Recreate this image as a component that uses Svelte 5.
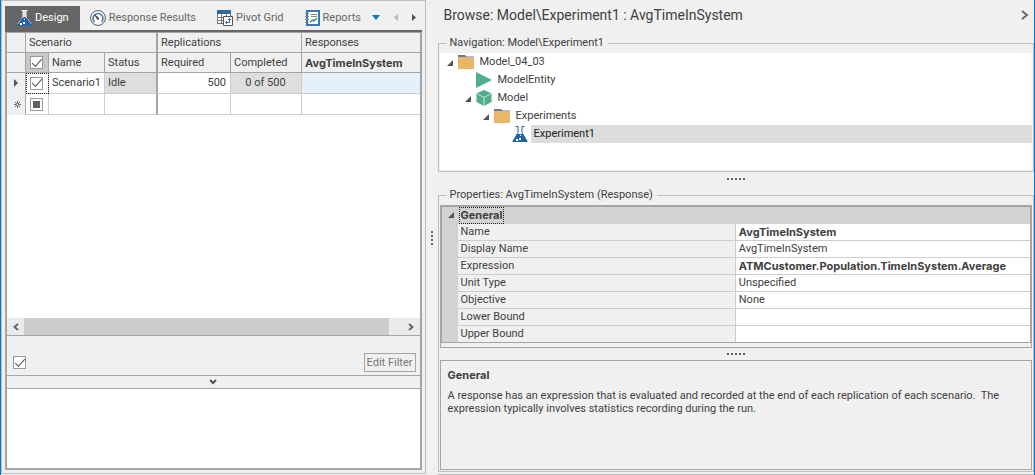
<script>
  let activeTab = 'Design';
  let allChecked = true;
  let filterOn = true;
  let scenario = { active: true, name: 'Scenario1', status: 'Idle', required: 500, completed: '0 of 500' };

  const tabs = ['Design', 'Response Results', 'Pivot Grid', 'Reports'];

  const tree = [
    { label: 'Model_04_03', icon: 'folder', level: 0, open: true },
    { label: 'ModelEntity', icon: 'entity', level: 1, open: false },
    { label: 'Model', icon: 'cube', level: 1, open: true },
    { label: 'Experiments', icon: 'folder', level: 2, open: true },
    { label: 'Experiment1', icon: 'flask', level: 3, open: false }
  ];
  let selected = 'Experiment1';

  const properties = [
    { name: 'Name', value: 'AvgTimeInSystem', changed: true },
    { name: 'Display Name', value: 'AvgTimeInSystem' },
    { name: 'Expression', value: 'ATMCustomer.Population.TimeInSystem.Average', changed: true },
    { name: 'Unit Type', value: 'Unspecified' },
    { name: 'Objective', value: 'None' },
    { name: 'Lower Bound', value: '' },
    { name: 'Upper Bound', value: '' }
  ];
</script>

<div class="window">
  <section class="left">
    <div class="tabs" role="tablist">
      {#each tabs as tab}
        <button type="button" role="tab" class="tab" class:active={activeTab === tab} aria-selected={activeTab === tab} on:click={() => (activeTab = tab)}>
          {#if tab === 'Design'}
            <svg width="15" height="16" viewBox="0 0 15 16">
              <path d="M4.500 .5h1.500v6.500L1 14M10.500 .5H9v6.500L14 14" fill="none" stroke="#fff" />
              <path d="M6 0h3v7H6z" fill="#dbe6f2" />
              <path d="M5 8h5l4.500 7v1H.5v-1z" fill="#2563a8" />
              <path d="M3 13h2v2H3zM6 12h2v2H6zM7 9h1v1H7z" fill="#fff" />
            </svg>
          {:else if tab === 'Response Results'}
            <svg width="16" height="16" viewBox="0 0 16 16">
              <circle cx="8" cy="8" r="7.400" fill="#fff" stroke="#555" />
              <path d="M4.500 12a5 5 0 1 1 7 0" fill="none" stroke="#3a76b5" stroke-width="1.500" />
              <path d="M5 5l4 3.500-1.500 1z" fill="#444" stroke="#444" />
            </svg>
          {:else if tab === 'Pivot Grid'}
            <svg width="16" height="16" viewBox="0 0 16 16">
              <path d="M.5.5h13v13H.5z" fill="#fff" stroke="#666" />
              <path d="M0 0h14v4H0z" fill="#34679f" />
              <path d="M.5 4v9.500M4.500 4v9.500M9.500 4v5M0 7.500h14M0 10.500h7" fill="none" stroke="#777" />
              <path d="M6.500 6.500h9v9h-9z" fill="#fff" stroke="#555" />
              <path d="M8 12.500l2-2v4zM10.500 10l2-2 2 2z" fill="#2a6db5" />
              <path d="M9.500 12.500h3v-3" fill="none" stroke="#2a6db5" />
            </svg>
          {:else}
            <svg width="15" height="16" viewBox="0 0 15 16">
              <path d="M2 1h12v14H2z" fill="#fff" stroke="#3a76b5" stroke-width="2" />
              <path d="M0 3.500h4M0 6.500h4M0 9.500h4M0 12.500h4" stroke="#888" />
              <path d="M6 4.500h6M6 6.500h6" stroke="#888" />
              <path d="M5 12l3-2 1 1 3-3" fill="none" stroke="#2f9468" stroke-width="1.500" />
            </svg>
          {/if}
          <span>{tab}</span>
        </button>
      {/each}
      <div class="arrows">
        <button type="button" aria-label="More reports"><svg width="8" height="5"><path d="M0 0h8L4 5z" fill="#0078d7" /></svg></button>
        <button type="button" aria-label="Previous tab" disabled><svg width="4" height="7"><path d="M4 0v7L0 3.500z" fill="#b8b8b8" /></svg></button>
        <button type="button" aria-label="Next tab"><svg width="4" height="7"><path d="M0 0v7l4-3.500z" fill="#555" /></svg></button>
      </div>
    </div>

    <div class="frame">
      <table class="grid">
        <colgroup>
          <col class="c-mark" /><col class="c-check" /><col class="c-name" /><col class="c-status" />
          <col class="c-required" /><col class="c-completed" /><col />
        </colgroup>
        <thead>
          <tr>
            <th></th>
            <th colspan="3" class="thick">Scenario</th>
            <th colspan="2">Replications</th>
            <th>Responses</th>
          </tr>
          <tr>
            <th></th>
            <th class="check pressed"><input type="checkbox" aria-label="Select all scenarios" bind:checked={allChecked} /></th>
            <th>Name</th>
            <th class="thick">Status</th>
            <th>Required</th>
            <th>Completed</th>
            <th class="strong">AvgTimeInSystem</th>
          </tr>
        </thead>
        <tbody>
          <tr>
            <td class="mark"><svg width="4" height="8"><path d="M0 0v8l4-4z" fill="#555" /></svg></td>
            <td class="check focus"><input type="checkbox" aria-label="Scenario1 active" bind:checked={scenario.active} /></td>
            <td>{scenario.name}</td>
            <td class="locked thick">{scenario.status}</td>
            <td class="num">{scenario.required}</td>
            <td class="locked mid">{scenario.completed}</td>
            <td class="response"></td>
          </tr>
          <tr>
            <td class="mark">
              <svg width="7" height="7" viewBox="0 0 7 7"><path d="M3.500 0v7M0 3.500h7M1 1l5 5M6 1L1 6" stroke="#666" /><circle cx="3.500" cy="3.500" r="1" fill="#eee" /></svg>
            </td>
            <td class="check"><input type="checkbox" aria-label="New scenario active" indeterminate={true} /></td>
            <td></td>
            <td class="thick"></td>
            <td></td>
            <td></td>
            <td></td>
          </tr>
        </tbody>
      </table>
      <div class="blank"></div>
      <div class="scrollbar">
        <button type="button" aria-label="Scroll left"><svg width="6" height="8"><path d="M5 1L1.500 4 5 7" fill="none" stroke="#666" stroke-width="2" /></svg></button>
        <div class="thumb"></div>
        <button type="button" aria-label="Scroll right"><svg width="6" height="8"><path d="M1 1l3.500 3L1 7" fill="none" stroke="#666" stroke-width="2" /></svg></button>
      </div>
      <div class="filter">
        <input type="checkbox" aria-label="Enable filter" bind:checked={filterOn} />
        <button type="button">Edit Filter</button>
      </div>
      <button type="button" class="collapse" aria-label="Collapse panel">
        <svg width="8" height="6"><path d="M1 1l3 3 3-3" fill="none" stroke="#555" stroke-width="2" /></svg>
      </button>
      <div class="notes"></div>
    </div>
  </section>

  <div class="splitter vertical"><i></i><i></i><i></i><i></i></div>

  <section class="right">
    <header>
      <h1>Browse: Model\Experiment1 : AvgTimeInSystem</h1>
      <button type="button" aria-label="Collapse browse panel"><svg width="8" height="10"><path d="M1 1l5 4-5 4" fill="none" stroke="#666" stroke-width="2" /></svg></button>
    </header>

    <fieldset class="navigation">
      <legend>Navigation: Model\Experiment1</legend>
      <ul class="tree" role="tree">
        {#each tree as node}
          <li role="treeitem" aria-selected={selected === node.label} class="level{node.level}">
            <span class="twisty">{#if node.open}<svg width="6" height="6"><path d="M6 0v6H0z" fill="#555" /></svg>{/if}</span>
            <span class="icon">
              {#if node.icon === 'folder'}
                <svg width="16" height="14" viewBox="0 0 16 14"><path d="M0 0h7l1.500 1.500H16V4H0z" fill="#777" /><path d="M0 2.500h16V14H0z" fill="#fff" /><path d="M0 3h16v11H0z" fill="#e9b765" /></svg>
              {:else if node.icon === 'entity'}
                <svg width="16" height="16"><path d="M0 0l16 8-16 8z" fill="#4fae88" /></svg>
              {:else if node.icon === 'cube'}
                <svg width="16" height="16" viewBox="0 0 16 16"><path d="M8 0l7.500 3.500v8.500L8 16 .5 12V3.500z" fill="#4fae88" /><path d="M.5 3.500L8 7.500l7.500-4M8 7.500V16" fill="none" stroke="#c5e8d9" /></svg>
              {:else}
                <svg width="16" height="16" viewBox="0 0 16 16"><path d="M3.500 .5H6v6L2 14M12.500 .5H10v6L14 14" fill="none" stroke="#2563a8" /><path d="M5 8h6l4.500 7v1H.5v-1z" fill="#2563a8" /><path d="M4 13h2v2H4zM7 12h2v2H7zM8 9h1v1H8z" fill="#fff" /></svg>
              {/if}
            </span>
            <button type="button" class="label" class:selected={selected === node.label} on:click={() => (selected = node.label)}>{node.label}</button>
          </li>
        {/each}
      </ul>
    </fieldset>

    <div class="splitter"><i></i><i></i><i></i><i></i><i></i></div>

    <fieldset class="properties">
      <legend>Properties: AvgTimeInSystem (Response)</legend>
      <div class="propbox">
        <table class="props">
          <colgroup><col class="p-gutter" /><col /><col class="p-value" /></colgroup>
          <tbody>
            <tr class="category">
              <td class="gutter"><svg width="6" height="6"><path d="M6 0v6H0z" fill="#555" /></svg></td>
              <th colspan="2" class="strong"><span>General</span></th>
            </tr>
            {#each properties as p}
              <tr>
                <td class="gutter"></td>
                <th>{p.name}</th>
                <td class="value" class:strong={p.changed}>{p.value}</td>
              </tr>
            {/each}
          </tbody>
        </table>
      </div>
      <div class="splitter small"><i></i><i></i><i></i><i></i><i></i></div>
      <div class="description">
        <h2 class="strong">General</h2>
        <p>A response has an expression that is evaluated and recorded at the end of each replication of each scenario.&nbsp; The expression typically involves statistics recording during the run.</p>
      </div>
    </fieldset>
  </section>
</div>

<style>
  :global(body) {
    background: #f0f0f0;
  }

  .window {
    display: flex;
    box-sizing: border-box;
    min-height: 100vh;
    border-left: 1px solid #0078d7;
    border-right: 1px solid #0078d7;
    background: #f0f0f0;
    color: #404040;
    font: 11px/16px Roboto, "Noto Sans", sans-serif;
  }

  .window * {
    box-sizing: border-box;
  }

  button {
    padding: 0;
    border: 0;
    background: none;
    color: inherit;
    font: inherit;
  }

  svg {
    display: block;
    flex: none;
  }

  table {
    width: 100%;
    border-collapse: separate;
    border-spacing: 0;
    table-layout: fixed;
  }

  th {
    font-weight: normal;
    text-align: left;
  }

  .window .strong {
    font-family: Inter, "Noto Sans", sans-serif;
    font-weight: bold;
  }

  /* left side */
  .left {
    display: flex;
    flex-direction: column;
    flex: 0 0 calc(41% + 1px);
    padding: 5px 3px 3px;
    border: 1px solid #bdbdbd;
    margin-bottom: 1px;
  }

  .tabs {
    display: flex;
    height: 26px;
    border-bottom: 2px solid #666;
  }

  .tab {
    display: flex;
    align-items: center;
    gap: 3px;
    padding: 0 11px 0 10px;
    color: #666;
    white-space: nowrap;
  }

  .tab.active {
    padding: 0 11px 0 12px;
    background: #666;
    color: #fff;
  }

  .arrows {
    display: flex;
    flex: 1;
    align-items: center;
    justify-content: space-between;
    padding: 0 6px 2px 0;
  }

  .frame {
    display: flex;
    flex: 1;
    flex-direction: column;
    border: 2px solid #a5a5a5;
    border-top-width: 1px;
    background: #fff;
  }

  .c-mark { width: 19px; }
  .c-check { width: 23px; }
  .c-name { width: 56px; }
  .c-status { width: 53px; }
  .c-required { width: 73px; }
  .c-completed { width: 71px; }

  .grid th,
  .grid td {
    padding: 0 4px 0 3px;
    border-right: 1px solid #cdcdcd;
    border-bottom: 1px solid #cdcdcd;
    white-space: nowrap;
  }

  .grid th {
    height: 20px;
    border-color: #a5a5a5;
    background: #f0f0f0;
  }

  .grid td {
    height: 21px;
  }

  .grid th:last-child,
  .grid td:last-child {
    border-right: 0;
  }

  .grid .thick {
    border-right: 2px solid #a5a5a5;
  }

  .grid .mark {
    padding: 0 7px;
    border-right-color: #a5a5a5;
    border-bottom-color: #f0f0f0;
    background: #f0f0f0;
  }

  .grid .check {
    padding: 0 4px;
  }

  .grid .pressed {
    background: #c8c8c8;
  }

  .grid .focus {
    outline: 1px dotted #222;
    outline-offset: -1px;
  }

  .grid .locked {
    background: #dedede;
  }

  .grid .num {
    text-align: right;
  }

  .grid .mid {
    text-align: center;
  }

  .grid .response {
    background: #e5f1fa;
  }

  input[type="checkbox"] {
    display: grid;
    place-items: center;
    width: 13px;
    height: 13px;
    margin: 0;
    border: 1px solid #999;
    background: #fff;
    appearance: none;
  }

  input:checked::before {
    width: 9px;
    height: 4px;
    border-bottom: 1px solid #555;
    border-left: 1px solid #555;
    margin-bottom: 3px;
    content: "";
    transform: rotate(-48deg);
  }

  input:indeterminate::before {
    width: 7px;
    height: 7px;
    background: #606060;
    content: "";
  }

  .blank {
    flex: 1;
  }

  .scrollbar {
    display: flex;
    height: 17px;
    background: #ebebeb;
  }

  .scrollbar button {
    display: grid;
    place-items: center;
    width: 17px;
  }

  .thumb {
    flex: 1;
    margin-right: 14px;
    background: #cdcdcd;
  }

  .filter {
    display: flex;
    align-items: flex-end;
    justify-content: space-between;
    height: 40px;
    padding: 0 4px 3px 6px;
    border-top: 1px solid #a5a5a5;
    background: #f0f0f0;
  }

  .filter input {
    margin-bottom: 3px;
  }

  .filter button {
    height: 19px;
    padding: 0 2px;
    border: 1px solid #a5a5a5;
    color: #777;
    line-height: 16px;
  }

  .collapse {
    display: grid;
    place-items: center;
    height: 14px;
    border-top: 1px solid #a5a5a5;
    border-bottom: 1px solid #a5a5a5;
    background: #f0f0f0;
  }

  .notes {
    height: 79px;
  }

  /* drag handles */
  .splitter {
    display: flex;
    align-items: center;
    justify-content: center;
    gap: 2px;
    height: 15px;
    padding-bottom: 2px;
  }

  .splitter.small {
    height: 12px;
    padding: 0;
  }

  .splitter.vertical {
    flex-direction: column;
    width: 12px;
    height: auto;
    padding: 0;
  }

  .splitter i {
    width: 2px;
    height: 2px;
    background: #606060;
  }

  /* right side */
  .right {
    display: flex;
    flex: 1;
    flex-direction: column;
    min-width: 0;
    padding-bottom: 2px;
    border-bottom: 1px solid #bdbdbd;
  }

  header {
    display: flex;
    align-items: center;
    justify-content: space-between;
    height: 30px;
    padding: 0 5px 0 6px;
    margin-bottom: 5px;
  }

  h1 {
    margin: 0;
    font-size: 14px;
    font-weight: normal;
    line-height: 20px;
  }

  fieldset {
    min-width: 0;
    padding: 0 1px 1px;
    border: 1px solid #bdbdbd;
    margin: 0;
  }

  legend {
    padding: 0 4px;
    margin-left: 6px;
  }

  .tree {
    min-height: 117px;
    padding: 0;
    margin: 2px 0 0;
    background: #fff;
    list-style: none;
  }

  .tree li {
    display: flex;
    height: 18px;
  }

  .level0 { padding-left: 5px; }
  .level1 { padding-left: 23px; }
  .level2 { padding-left: 41px; }
  .level3 { padding-left: 59px; }

  .twisty {
    width: 12px;
    padding: 7px 0 0 2px;
  }

  .icon {
    display: grid;
    place-items: center;
    width: 18px;
    margin-right: 2px;
  }

  .label {
    flex: 1;
    padding-left: 3px;
    text-align: left;
  }

  .label.selected {
    background: #dcdcdc;
    color: #222;
  }

  .properties {
    display: flex;
    flex: 1;
    flex-direction: column;
  }

  .propbox {
    padding-bottom: 4px;
    border: 1px solid #a5a5a5;
    margin-top: 2px;
  }

  .props {
    border: 1px solid #a5a5a5;
  }

  .p-gutter { width: 16px; }
  .p-value { width: 50%; }

  .props th,
  .props td {
    height: 17px;
    padding: 0 3px;
    border-bottom: 1px solid #cdcdcd;
    line-height: 16px;
  }

  .props th {
    border-right: 1px solid #cdcdcd;
  }

  .props .value {
    background: #fff;
    white-space: nowrap;
  }

  .props .gutter,
  .props .category th {
    border-color: #d2d2d2;
    background: #d2d2d2;
  }

  .props .gutter {
    padding: 0 6px;
  }

  .props tr:last-child > * {
    height: 16px;
    border-bottom: 0;
  }

  .category span {
    display: block;
    width: fit-content;
    height: 15px;
    padding: 0 1px;
    outline: 1px dotted #222;
    margin-left: -1px;
    line-height: 14px;
  }

  .description {
    flex: 1;
    min-height: 110px;
    padding: 6px 7px;
    border: 1px solid #a5a5a5;
  }

  h2 {
    margin: 0 0 6px;
    font-size: 11px;
    line-height: 16px;
  }

  p {
    margin: 0;
    line-height: 13px;
  }
</style>
